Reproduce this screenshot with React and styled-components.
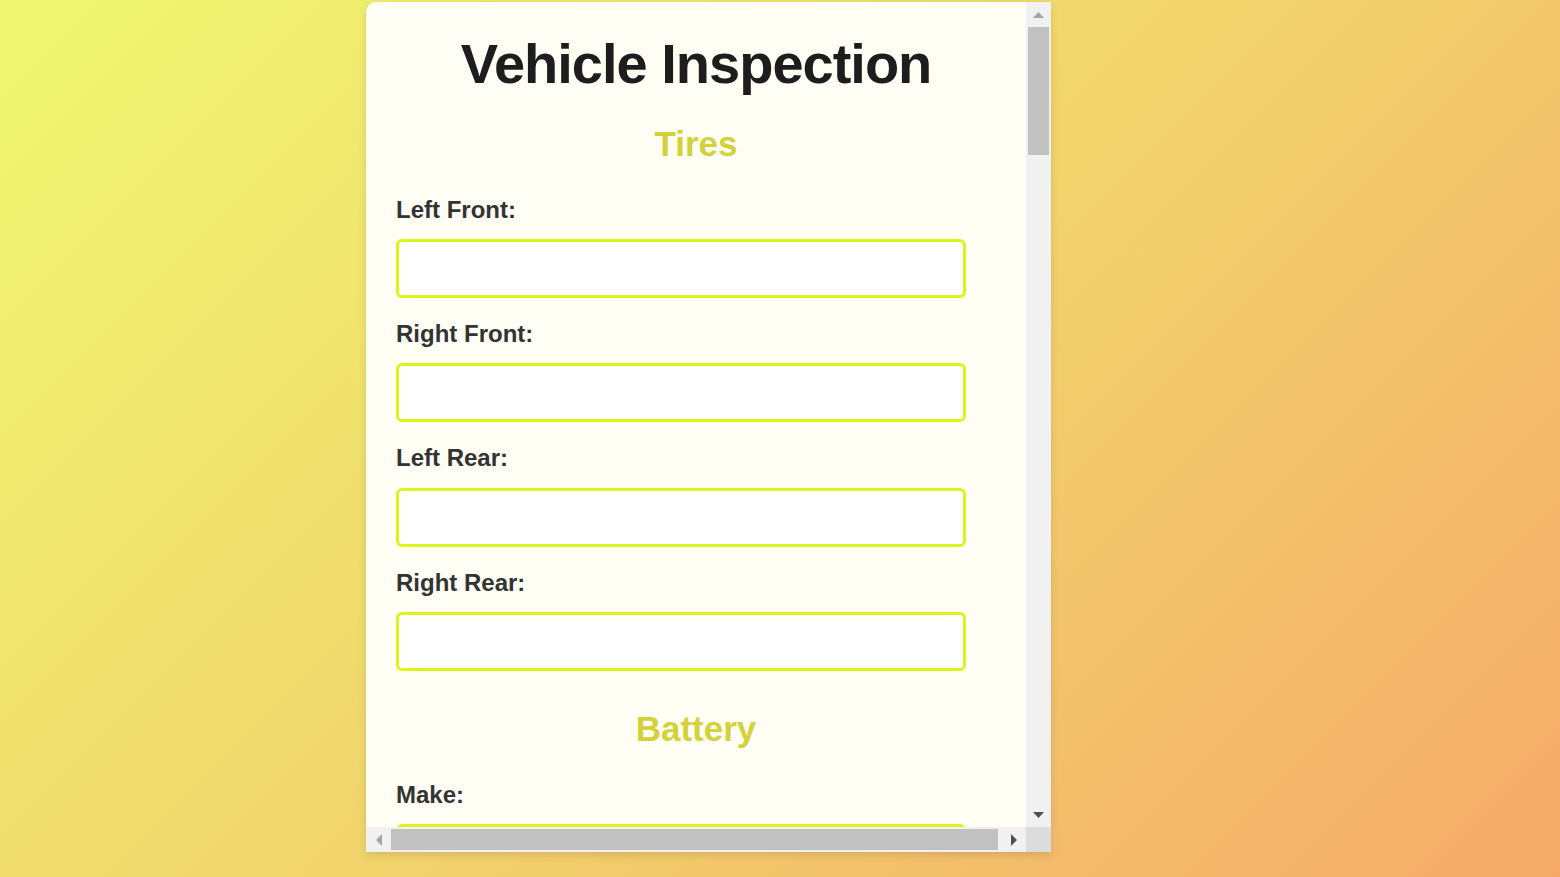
import React from "react";
import styled, { createGlobalStyle } from "styled-components";

const GlobalStyle = createGlobalStyle`
  html, body {
    margin: 0;
    padding: 0;
    height: 100%;
  }
  body {
    font-family: "Liberation Sans", Arial, sans-serif;
    background: linear-gradient(135deg, #eff870 0%, #f1d46c 50%, #f5aa69 100%);
    overflow: hidden;
  }
`;

const Page = styled.div`
  box-sizing: border-box;
  height: 100vh;
  display: flex;
  align-items: flex-start;
  padding: 2px 0 0 366px;
`;

const Card = styled.div`
  width: 685px;
  height: 850px;
  display: grid;
  grid-template-columns: 660px 25px;
  grid-template-rows: 825px 25px;
  overflow: hidden;
  background: #fefef4;
  border-radius: 10px 0 0 0;
  box-shadow: 0 3px 8px rgba(0, 0, 0, 0.12);
`;

const Viewport = styled.form`
  box-sizing: border-box;
  overflow: hidden;
  padding: 30px;
`;

const ScrollBar = styled.div`
  display: flex;
  flex-direction: ${(p) => (p.$horizontal ? "row" : "column")};
  background: #f1f1f1;
`;

const ScrollButton = styled.div`
  flex: 0 0 25px;
  width: 25px;
  height: 25px;
  display: flex;
  align-items: center;
  justify-content: center;
`;

const Track = styled.div`
  flex: 1;
  display: flex;
  flex-direction: ${(p) => (p.$horizontal ? "row" : "column")};
  padding: ${(p) => (p.$horizontal ? "2px 0" : "0 2px")};
`;

const Thumb = styled.div`
  background: #c1c1c1;
  flex: 0 0 ${(p) => p.$size}px;
`;

const Corner = styled.div`
  background: #dcdcdc;
`;

const Title = styled.h1`
  margin: 0 0 28px;
  text-align: center;
  font-size: 56px;
  line-height: 64px;
  font-weight: 700;
  letter-spacing: -1px;
  color: #1d1d1d;
`;

const Sections = styled.div`
  display: flex;
  flex-direction: column;
  gap: 38px;
`;

const Section = styled.section`
  display: flex;
  flex-direction: column;
`;

const SectionTitle = styled.h2`
  margin: 0 0 31.5px;
  text-align: center;
  font-size: 35px;
  line-height: 40px;
  font-weight: 700;
  color: #d3d23b;
`;

const FieldList = styled.div`
  display: flex;
  flex-direction: column;
  gap: 22px;
`;

const Field = styled.div`
  display: flex;
  flex-direction: column;
  gap: 16px;
`;

const Label = styled.label`
  font-size: 24px;
  line-height: 27.4px;
  font-weight: 700;
  color: #333333;
`;

const Input = styled.input`
  box-sizing: border-box;
  width: 95%;
  height: 59px;
  border: 3px solid #ddf41c;
  border-radius: 6px;
  background: #ffffff;
  padding: 0 12px;
  font-family: "Liberation Sans", Arial, sans-serif;
  font-size: 20px;
  outline: none;
`;

const Submit = styled.button`
  box-sizing: border-box;
  margin-top: 38px;
  width: 95%;
  height: 60px;
  border: none;
  border-radius: 6px;
  background: #d3d23b;
  color: #ffffff;
  font-family: "Liberation Sans", Arial, sans-serif;
  font-size: 24px;
  font-weight: 700;
`;

const Arrow = ({ dir, color }) => {
  const pts = {
    up: "0,6 5.5,0 11,6",
    down: "0,0 11,0 5.5,6",
    left: "6,0 6,12 0,6",
    right: "0,0 6,6 0,12",
  }[dir];
  const vertical = dir === "up" || dir === "down";
  return (
    <svg width={vertical ? 11 : 6} height={vertical ? 6 : 12} viewBox={vertical ? "0 0 11 6" : "0 0 6 12"}>
      <polygon points={pts} fill={color} />
    </svg>
  );
};

const sections = [
  { title: "Tires", fields: ["Left Front", "Right Front", "Left Rear", "Right Rear"] },
  { title: "Battery", fields: ["Make", "Model", "Voltage", "Date"] },
  { title: "Brakes", fields: ["Front Pads", "Rear Pads", "Rotors", "Parking Brake"] },
  { title: "Lights", fields: ["Headlights", "Tail Lights", "Brake Lights", "Turn Signals", "Hazard Lights"] },
  { title: "Fluids", fields: ["Engine Oil", "Coolant", "Brake Fluid", "Transmission Fluid", "Washer Fluid"] },
  { title: "Wipers", fields: ["Front Left", "Front Right", "Rear"] },
  { title: "Engine", fields: ["Belts", "Hoses", "Air Filter", "Spark Plugs"] },
  { title: "Body", fields: ["Windshield", "Mirrors", "Doors", "Paint"] },
];

export default function App() {
  return (
    <>
      <GlobalStyle />
      <Page>
        <Card>
          <Viewport onSubmit={(e) => e.preventDefault()}>
            <Title>Vehicle Inspection</Title>
            <Sections>
              {sections.map((s) => (
                <Section key={s.title}>
                  <SectionTitle>{s.title}</SectionTitle>
                  <FieldList>
                    {s.fields.map((f) => {
                      const id = `${s.title}-${f}`.replace(/\s+/g, "-").toLowerCase();
                      return (
                        <Field key={f}>
                          <Label htmlFor={id}>{f}:</Label>
                          <Input id={id} type="text" />
                        </Field>
                      );
                    })}
                  </FieldList>
                </Section>
              ))}
            </Sections>
            <Submit type="submit">Submit Inspection</Submit>
          </Viewport>
          <ScrollBar>
            <ScrollButton>
              <Arrow dir="up" color="#a3a3a3" />
            </ScrollButton>
            <Track>
              <Thumb $size={128} />
            </Track>
            <ScrollButton>
              <Arrow dir="down" color="#505050" />
            </ScrollButton>
          </ScrollBar>
          <ScrollBar $horizontal>
            <ScrollButton>
              <Arrow dir="left" color="#a3a3a3" />
            </ScrollButton>
            <Track $horizontal>
              <Thumb $size={607} />
            </Track>
            <ScrollButton>
              <Arrow dir="right" color="#505050" />
            </ScrollButton>
          </ScrollBar>
          <Corner />
        </Card>
      </Page>
    </>
  );
}
